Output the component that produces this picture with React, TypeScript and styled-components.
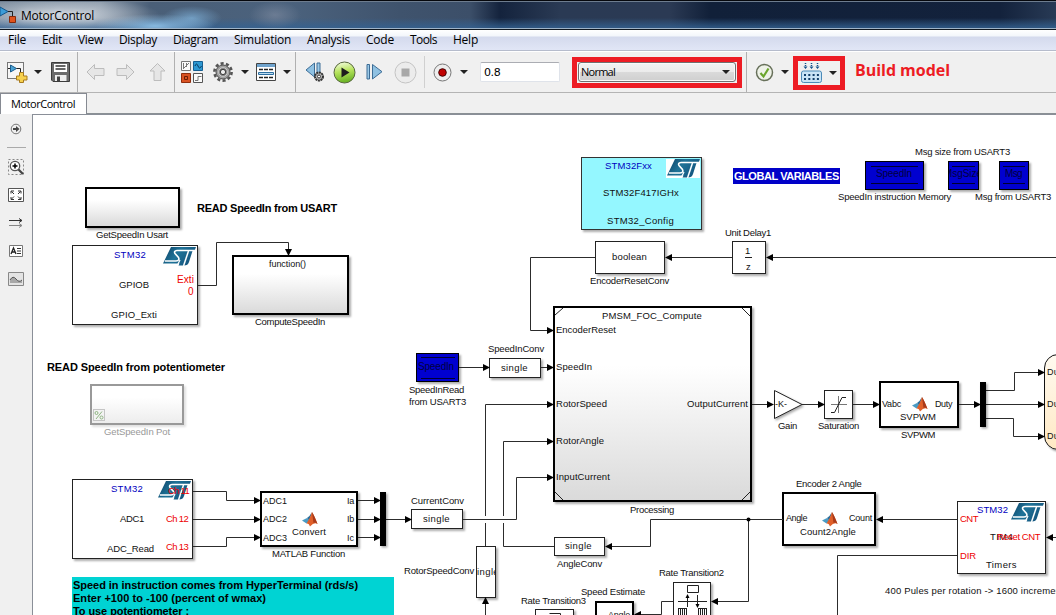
import React from "react";
import styled, { createGlobalStyle, css } from "styled-components";

const GlobalStyle = createGlobalStyle`
  * { box-sizing: border-box; }
  body { margin: 0; background: #f0f0f0; overflow: hidden; }
`;

const UI_FONT = '"Open Sans", "Noto Sans", sans-serif';
const BLOCK_FONT = '"Liberation Sans", Arial, sans-serif';

const pen = document.createElement("canvas").getContext("2d");

/* Letter spacing that makes a label exactly as wide as the room it has. */
function tracking(text: string, width: number, font: string): string {
  if (!pen) return "normal";
  pen.font = font;
  return `${((width - pen.measureText(text).width) / text.length).toFixed(3)}px`;
}

/* ---------- window frame ---------- */

const Window = styled.div`
  display: flex;
  flex-direction: column;
  width: 1056px;
  height: 615px;
  overflow: hidden;
  background: #f0f0f0;
  color: #000;
`;

const TitleBar = styled.header`
  display: flex;
  align-items: center;
  flex: none;
  height: 30px;
  border-top: 1px solid #05070c;
  border-bottom: 1px solid #101820;
  box-shadow: inset 0 1px 0 #6d7c8e, inset 0 -1px 0 #9fb4c8;
  background:
    radial-gradient(ellipse 100px 18px at 60px 14px, rgba(222, 227, 234, 0.8), transparent),
    radial-gradient(ellipse 60px 12px at 155px 25px, rgba(140, 190, 228, 0.95), transparent),
    radial-gradient(ellipse 30px 12px at 192px 17px, rgba(125, 175, 215, 0.75), transparent),
    radial-gradient(ellipse 26px 14px at 275px 14px, rgba(140, 150, 170, 0.5), transparent),
    linear-gradient(180deg, transparent 60%, rgba(52, 98, 146, 0.75) 92%),
    linear-gradient(90deg, #77889a 0, #8796a6 100px, #4a5f78 150px, #4b627d 290px, #3f536d 400px, #3c4f69 470px, #14233d 500px, #2a3a54 560px, #2b3a54 670px, #112039 710px, #13223c 1000px, #283a55 1056px);
`;

const AppIcon = styled.svg`
  flex: none;
  width: 18px;
  height: 20px;
`;

const Title = styled.h1`
  margin: 0 0 0 3px;
  font: 400 12px ${UI_FONT};
  text-shadow: 0 0 6px rgba(255, 255, 255, 0.8);
`;

const MenuBar = styled.nav`
  display: flex;
  align-items: center;
  flex: none;
  height: 21px;
  padding-left: 8px;
  border-bottom: 1px solid #b6bccc;
  background: linear-gradient(#fff 0, #f3f6fb 6px, #d4daed 7px, #e1e6f6 20px);
`;

const MenuItem = styled.span<{ $w: number }>`
  flex: none;
  width: ${(p) => p.$w}px;
  white-space: nowrap;
  font: 400 12px/18px ${UI_FONT};
`;

/* ---------- toolbar ---------- */

const ToolBar = styled.div`
  display: flex;
  align-items: center;
  flex: none;
  height: 42px;
  border-top: 1px solid #fff;
  border-bottom: 1px solid #b4b4b4;
  background: #f0f0f0;
`;

const Slot = styled.div<{ $w: number; $gap: number }>`
  display: flex;
  align-items: center;
  justify-content: center;
  flex: none;
  width: ${(p) => p.$w}px;
  height: 24px;
  margin-left: ${(p) => p.$gap}px;
`;

const Caret = styled.i<{ $gap: number }>`
  flex: none;
  margin-left: ${(p) => p.$gap}px;
  border: solid transparent;
  border-width: 4px 4px 0;
  border-top-color: #222;
`;

const Separator = styled.span<{ $gap: number; $short?: boolean }>`
  flex: none;
  width: 1px;
  height: ${(p) => (p.$short ? "32px" : "40px")};
  margin-left: ${(p) => p.$gap}px;
  background: ${(p) => (p.$short ? "#d0d0d0" : "#b0b0b0")};
`;

const StopTime = styled.div`
  flex: none;
  width: 80px;
  height: 20px;
  margin-left: 12px;
  padding-left: 3px;
  border: 1px solid #dfe3ea;
  border-top-color: #abadb3;
  border-radius: 2px;
  background: #fff;
  font: 11px/20px "DejaVu Sans", sans-serif;
  letter-spacing: -0.4px;
`;

const Highlight = styled.div<{ $w: number; $h: number; $gap: number; $drop?: number }>`
  display: flex;
  align-items: center;
  flex: none;
  width: ${(p) => p.$w}px;
  height: ${(p) => p.$h}px;
  margin-left: ${(p) => p.$gap}px;
  margin-top: ${(p) => p.$drop || 0}px;
  border: 5px solid #ed1c24;
`;

const Combo = styled.div`
  display: flex;
  align-items: center;
  flex: 1;
  height: 20px;
  margin: 0 1px;
  padding: 0 5px 0 2px;
  justify-content: space-between;
  border: 1px solid #707070;
  border-radius: 3px;
  box-shadow: inset 0 0 0 1px #fafafa;
  background: linear-gradient(#f2f2f2, #ebebeb 50%, #dadada 50%, #cfcfcf);
  font: 11px/18px ${UI_FONT};
`;

const Note = styled.strong`
  margin: -4px 0 0 10px;
  white-space: nowrap;
  color: #ed1c24;
  font: 700 16px/20px ${UI_FONT};
`;

/* ---------- tabs and side palette ---------- */

const TabStrip = styled.div`
  display: flex;
  flex: none;
  height: 21px;
  box-shadow: inset 0 -1px 0 #8a9094;
`;

const Tab = styled.div`
  width: 87px;
  padding-left: 10px;
  border: 1px solid #868a92;
  border-bottom: 0;
  background: #fff;
  white-space: nowrap;
  font: 11px/19px ${UI_FONT};
`;

const Body = styled.main`
  display: flex;
  flex: 1;
  min-height: 0;
`;

const Palette = styled.aside`
  display: flex;
  flex-direction: column;
  align-items: center;
  flex: none;
  width: 32px;
  padding-top: 7px;
`;

const PaletteRule = styled.hr`
  width: 19px;
  height: 1px;
  margin: 10px 0 11px;
  border: 0;
  background: #aaa;
`;

const PaletteIcon = styled.svg`
  flex: none;
  width: 16px;
  height: 16px;
  & + & { margin-top: 12px; }
`;

/* ---------- model canvas ---------- */

const Canvas = styled.section`
  position: relative;
  flex: 1;
  overflow: hidden;
  border-top: 1px solid #8a8f98;
  border-left: 1px solid #8a8f98;
  background: #fff;
`;

const Sheet = styled.div`
  position: absolute;
  left: -33px;
  top: -115px;
  width: 1056px;
  height: 615px;
`;

const Wires = styled.svg`
  position: absolute;
  left: 0;
  top: 0;
`;

type Skin = "plain" | "subsystem" | "outlined" | "config" | "store" | "muted" | "chart";

const skins: Record<Skin, ReturnType<typeof css>> = {
  plain: css`border: 1px solid #222; background: #fff;`,
  outlined: css`border: 2px solid #000; background: #fff;`,
  subsystem: css`border: 2px solid #000; background: linear-gradient(#fff 30%, #dadada);`,
  config: css`border: 1px solid #333; background: #94f7ff;`,
  store: css`border: 1px solid #000; background: #0000d0;`,
  muted: css`border: 2px solid #999; background: linear-gradient(#fff 30%, #ededed);`,
  chart: css`border: 1px solid #111; border-radius: 14px; background: linear-gradient(#fffaf0, #ffe9c4);`,
};

const Block = styled.div<{ $x: number; $y: number; $w: number; $h: number; $skin: Skin }>`
  position: absolute;
  left: ${(p) => p.$x}px;
  top: ${(p) => p.$y}px;
  width: ${(p) => p.$w}px;
  height: ${(p) => p.$h}px;
  overflow: hidden;
  box-shadow: 2px 2px 2px rgba(0, 0, 0, ${(p) => (p.$skin === "muted" ? 0.12 : 0.32)});
  ${(p) => skins[p.$skin]}
`;

const LabelText = styled.span<{ $x: number; $y: number; $size: number; $bold?: boolean; $color: string }>`
  position: absolute;
  left: ${(p) => p.$x}px;
  top: ${(p) => p.$y - 6}px;
  white-space: pre;
  color: ${(p) => p.$color};
  font: ${(p) => (p.$bold ? 700 : 400)} ${(p) => p.$size}px/12px ${BLOCK_FONT};
`;

const Banner = styled.div<{ $x: number; $y: number; $w: number; $h: number; $color: string }>`
  position: absolute;
  left: ${(p) => p.$x}px;
  top: ${(p) => p.$y}px;
  width: ${(p) => p.$w}px;
  height: ${(p) => p.$h}px;
  background: ${(p) => p.$color};
`;

type LabelData = [text: string, x: number, y: number, w: number, color?: string, size?: number, bold?: boolean];

function Label({ data }: { data: LabelData }) {
  const [text, x, y, w, color = "#111", size = 9.5, bold = false] = data;
  return (
    <LabelText
      $x={x}
      $y={y}
      $size={size}
      $bold={bold}
      $color={color}
      style={{ letterSpacing: tracking(text, w, `${bold ? 700 : 400} ${size}px ${BLOCK_FONT}`) }}
    >
      {text}
    </LabelText>
  );
}

const blocks: [Skin, number, number, number, number][] = [
  ["subsystem", 85, 187, 95, 41],
  ["plain", 72, 245, 126, 80],
  ["subsystem", 232, 255, 117, 60],
  ["muted", 90, 384, 94, 41],
  ["plain", 72, 479, 121, 80],
  ["outlined", 260, 491, 98, 56],
  ["plain", 411, 509, 52, 20],
  ["plain", 476, 546, 20, 52],
  ["plain", 554, 537, 51, 19],
  ["subsystem", 553, 306, 199, 196],
  ["store", 416, 353, 43, 29],
  ["plain", 489, 358, 52, 20],
  ["config", 581, 157, 121, 73],
  ["plain", 595, 241, 70, 33],
  ["plain", 732, 241, 34, 33],
  ["store", 865, 161, 59, 29],
  ["store", 948, 161, 31, 29],
  ["store", 999, 161, 30, 29],
  ["plain", 824, 390, 29, 29],
  ["outlined", 879, 381, 80, 47],
  ["chart", 1044, 354, 60, 96],
  ["outlined", 782, 492, 94, 54],
  ["plain", 957, 501, 89, 73],
  ["plain", 673, 582, 38, 50],
  ["outlined", 595, 601, 39, 40],
  ["plain", 535, 609, 39, 40],
];

const BLUE = "#0000c0";
const RED = "#ee0000";
const NAVY = "#000040";

const labels: LabelData[] = [
  ["GetSpeedIn Usart", 96, 235, 72],
  ["READ SpeedIn from USART", 197, 208, 140, "#000", 11, true],
  ["STM32", 114, 255, 32, BLUE],
  ["GPIOB", 119, 285, 30],
  ["Exti", 177, 280, 17, RED, 10],
  ["0", 188, 292, 6, RED, 10],
  ["GPIO_Exti", 111, 315, 46],
  ["function()", 269, 264, 37, "#111", 9],
  ["ComputeSpeedIn", 255, 322, 70],
  ["READ SpeedIn from potentiometer", 47, 367, 178, "#000", 11, true],
  ["GetSpeedIn Pot", 104, 432, 66, "#999"],
  ["STM32", 111, 489, 32, BLUE],
  ["ADC1", 120, 519, 24],
  ["Ch 12", 166, 519, 22, RED],
  ["ADC_Read", 107, 549, 47],
  ["Ch 13", 166, 547, 22, RED],
  ["ADC1", 263, 501, 24, "#111", 9],
  ["ADC2", 263, 519, 24, "#111", 9],
  ["ADC3", 263, 538, 24, "#111", 9],
  ["Ia", 347, 501, 7, "#111", 9],
  ["Ib", 347, 519, 7, "#111", 9],
  ["Ic", 347, 538, 7, "#111", 9],
  ["Convert", 292, 532, 34],
  ["MATLAB Function", 272, 554, 73],
  ["CurrentConv", 411, 501, 53],
  ["single", 423, 519, 27],
  ["RotorSpeedConv", 404, 571, 70],
  ["single", 565, 546, 27],
  ["AngleConv", 557, 564, 45],
  ["PMSM_FOC_Compute", 602, 316, 100],
  ["EncoderReset", 556, 330, 60],
  ["SpeedIn", 556, 367, 36],
  ["RotorSpeed", 556, 404, 51],
  ["RotorAngle", 556, 441, 48],
  ["InputCurrent", 556, 477, 54],
  ["OutputCurrent", 687, 404, 61],
  ["Processing", 630, 510, 44],
  ["SpeedIn", 418, 367, 36, NAVY, 10],
  ["SpeedInRead", 409, 390, 55],
  ["from USART3", 409, 402, 57],
  ["SpeedInConv", 488, 349, 56],
  ["single", 501, 368, 27],
  ["STM32Fxx", 605, 166, 47, BLUE],
  ["STM32F417IGHx", 603, 193, 76],
  ["STM32_Config", 607, 221, 67],
  ["boolean", 612, 257, 35],
  ["EncoderResetConv", 590, 281, 79],
  ["Unit Delay1", 725, 233, 46],
  ["1", 745, 251, 6],
  ["z", 746, 267, 5],
  ["GLOBAL VARIABLES", 734, 176, 105, "#fff", 11, true],
  ["SpeedIn", 876, 174, 36, NAVY, 10],
  ["Msg", 1005, 174, 17, NAVY, 10],
  ["SpeedIn instruction Memory", 838, 197, 113],
  ["Msg size from USART3", 915, 152, 95],
  ["Msg from USART3", 975, 197, 76],
  ["-K-", 775, 404, 12, "#111", 9],
  ["Gain", 778, 426, 19],
  ["Saturation", 818, 426, 41],
  ["Vabc", 882, 404, 19, "#111", 9],
  ["Duty", 935, 404, 17, "#111", 9],
  ["SVPWM", 900, 417, 36],
  ["SVPWM", 901, 435, 34],
  ["Du", 1047, 372, 12, "#111", 9],
  ["Du", 1047, 404, 12, "#111", 9],
  ["Du", 1047, 436, 12, "#111", 9],
  ["Encoder 2 Angle", 796, 484, 66],
  ["Angle", 786, 518, 21, "#111", 9],
  ["Count", 849, 518, 23, "#111", 9],
  ["Count2Angle", 800, 532, 56],
  ["STM32", 977, 510, 31, BLUE],
  ["CNT", 960, 519, 18, RED],
  ["DIR", 960, 556, 16, RED],
  ["TIM4", 990, 537, 23],
  ["Reset CNT", 997, 537, 43, RED],
  ["Timers", 986, 565, 31],
  ["400 Pules per rotation -> 1600 increments", 885, 591, 184],
  ["Speed Estimate", 581, 592, 64],
  ["Rate Transition2", 659, 573, 65],
  ["Rate Transition3", 521, 601, 65],
  ["Angle", 608, 615, 22, "#111", 9],
  ["Speed in instruction comes from HyperTerminal (rds/s)", 73, 585, 285, "#000", 11, true],
  ["Enter +100 to -100 (percent of wmax)", 73, 598, 193, "#000", 11, true],
  ["To use potentiometer :", 73, 611, 116, "#000", 11, true],
];

/* Signal lines, in the order in which they are laid over each other. */
const lines = [
  "M198 285.5H216.5V242.5H288.5V250",
  "M193 491.5H226.5V500.5H255",
  "M193 519.5H255",
  "M193 546.5H226.5V537.5H255",
  "M358 500.5H375M358 519.5H375M358 537.5H375",
  "M386 519.5H406",
  "M485.5 546V404.5H548M485.5 615V603",
  "M554 546.5H503.5V441.5H548",
  "M595 257.5H530.5V330.5H548",
  "M732 257.5H671M1056 257.5H772",
  "M459 367.5H484M541 367.5H548",
  "M752 404.5H769M802 404.5H819M853 404.5H874M959 404.5H975",
  "M986 390.5H1014.5V372.5H1039M986 404.5H1039M986 418.5H1013.5V436.5H1039",
  "M783 519.5H650.5V546.5H611M748.5 519.5V601.5H717",
  "M957 519.5H882M957 555.5H837.5V615M1056 537.5H1052",
  "M673 601.5H661.5V614.5H640",
];

/* Arrow tips: position and heading in degrees, 0 points right. */
const tips: [number, number, number][] = [
  [288.5, 256, 90],
  [261, 500.5, 0], [261, 519.5, 0], [261, 537.5, 0],
  [381, 500.5, 0], [381, 519.5, 0], [381, 537.5, 0],
  [412, 519.5, 0], [485.5, 597, -90],
  [554, 330.5, 0], [554, 367.5, 0], [554, 404.5, 0], [554, 441.5, 0], [554, 477.5, 0],
  [490, 367.5, 0], [605, 546.5, 180], [665, 257.5, 180], [766, 257.5, 180],
  [774, 404.5, 0], [825, 404.5, 0], [880, 404.5, 0], [981, 404.5, 0],
  [1045, 372.5, 0], [1045, 404.5, 0], [1045, 436.5, 0],
  [876, 519.5, 180], [1046, 537.5, 180], [711, 601.5, 180], [634, 614.5, 180],
];

function StLogo({ x, y }: { x: number; y: number }) {
  return (
    <g transform={`translate(${x} ${y})`}>
      <path d="M8 0H33L31.500 4H29.500L26 15Q25 18.500 21 18.500H15.500L16.500 16.500H0Z" fill="url(#st)" />
      <path d="M32.500 3.500H14Q10.500 4 12 6.500L15.500 10.500Q17 13.500 13 14H1.800" fill="none" stroke="#fff" strokeWidth="1.600" />
      <path d="M25.500 4L20.500 19" fill="none" stroke="#fff" strokeWidth="1.500" />
      <path d="M17 13L14 19" fill="none" stroke="#fff" strokeWidth="1.300" />
    </g>
  );
}

function MatlabLogo({ x, y }: { x: number; y: number }) {
  return (
    <g transform={`translate(${x} ${y})`}>
      <path d="M0 8.500L5 6L7.500 9L4.500 11.500Z" fill="#4a9bc4" />
      <path d="M5 6Q8 4 10 0L7.500 9Z" fill="#2a6e9c" />
      <path d="M4.500 11.500Q8 7 10 0Q12.500 4 15.500 12Q12.500 9.500 8 14.500Q7 11 4.500 11.500Z" fill="#e0602a" />
      <path d="M10 0Q12.500 4 15.500 12Q13 9.800 11.500 11Z" fill="#a83a1a" />
    </g>
  );
}

function Diagram() {
  return (
    <Canvas>
      <Sheet>
        <Banner $x={72} $y={577} $w={322} $h={38} $color="#00d3d3" />
        <Banner $x={733} $y={168} $w={107} $h={16} $color="#0000c8" />
        {blocks.map(([skin, x, y, w, h]) => (
          <Block key={`${x}-${y}`} $skin={skin} $x={x} $y={y} $w={w} $h={h}>
            {x === 948 && <Label data={["MsgSize", -5, 12, 38, NAVY, 10]} />}
            {x === 476 && <Label data={["single", -5, 25, 27]} />}
          </Block>
        ))}
        <Wires width="1056" height="615" viewBox="0 0 1056 615">
          <defs>
            <linearGradient id="st" x1="0" y1="0" x2="1" y2="0.400">
              <stop offset="0" stopColor="#0d3f63" />
              <stop offset="0.500" stopColor="#1f7398" />
              <stop offset="1" stopColor="#14557e" />
            </linearGradient>
            <filter id="soft" x="-20%" y="-20%" width="150%" height="150%">
              <feDropShadow dx="1.500" dy="1.500" stdDeviation="1" floodOpacity="0.350" />
            </filter>
          </defs>
          <g fill="none" stroke="#2c2c2c">
            {lines.map((d) => <path key={d} d={d} />)}
          </g>
          <path d="M485.500 516V523M503.500 516V523" stroke="#fff" strokeWidth="3" />
          <path d="M463 519.500H516.500V477.500H548" fill="none" stroke="#2c2c2c" />
          <g fill="#000">
            {tips.map(([x, y, a]) => (
              <path key={`${x},${y}`} d="M0 0L-7 -3.500V3.500Z" transform={`translate(${x} ${y}) rotate(${a})`} />
            ))}
            <circle cx="748.500" cy="519.500" r="2" />
            <path d="M380 492h6v54h-6zM980 382h6v45h-6z" filter="url(#soft)" />
          </g>
          <path d="M774.500 390.500L802 404.500L774.500 418.500Z" fill="#fff" stroke="#222" filter="url(#soft)" />
          <g fill="none" stroke="#222">
            <path d="M831 404.500H847M838.500 396V413" stroke="#777" />
            <path d="M831 412.500H834.500L842 397.500H846" />
            <path d="M745 257.500H752" />
            <path d="M555 315L563 308M742 308L750 316M555 492L563 500M742 500L750 492" />
            <path d="M871 166.500H918M871 183.500H918M952 166.500H975M952 183.500H975M1003 166.500H1025M1003 183.500H1025M421 357.500H455M421 378.500H455" stroke="#000030" />
            <path d="M687.500 585.500H698.500V592.500H687.500ZM678 601.500H707M687.500 607V596M697.500 595V607M549.500 613.500H560.500V620" />
            <path d="M678.500 609V615M680.500 609V615M682.500 609V615M684.500 609V615M686.500 609V615M698.500 609V615M700.500 609V615M702.500 609V615M704.500 609V615M706.500 609V615M678 608.500H687M698 608.500H707" />
          </g>
          <path d="M687.500 594L689.500 598H685.500ZM697.500 608L699.500 604H695.500Z" />
          <rect x="93.500" y="409.500" width="11" height="11" fill="#f3f3f3" stroke="#c5c5c5" />
          <g fill="none" stroke="#8fb582">
            <circle cx="96.500" cy="413" r="1.500" />
            <circle cx="101.500" cy="417.500" r="1.500" />
            <path d="M96 419L102 411.500" />
          </g>
          <path d="M666 159H700V178H666Z" fill="#fff" />
          <StLogo x={667} y={159} />
          <StLogo x={163} y={247} />
          <StLogo x={158} y={481} />
          <StLogo x={1011} y={503} />
          <MatlabLogo x={302} y={512} />
          <MatlabLogo x={912} y={397} />
          <MatlabLogo x={822} y={512} />
        </Wires>
        {labels.map((l) => <Label key={`${l[0]}${l[1]}${l[2]}`} data={l} />)}
        <Label data={["Ch 11", 168, 491, 21, RED]} />
      </Sheet>
    </Canvas>
  );
}

/* ---------- toolbar drawings ---------- */

const NewModelIcon = () => (
  <svg width="21" height="22" viewBox="0 0 21 22">
    <rect x="0.500" y="1.500" width="16" height="16" fill="#f6f6f6" stroke="#777" />
    <path d="M3.500 4L9.500 7.500L3.500 11Z" fill="#4aa3d6" stroke="#1b5c8c" />
    <path d="M1 7.500H3M9.500 7.500H13.500V12" fill="none" stroke="#222" />
    <path d="M12.500 11.500h4v3.500h3.500v4h-3.500v2.500h-4v-2.500h-3v-4h3z" fill="#f6d04d" stroke="#a87b1e" />
  </svg>
);

const SaveIcon = () => (
  <svg width="19" height="20" viewBox="0 0 19 20">
    <path d="M0.500 0.500H18.500V19.500H2L0.500 18Z" fill="#6b6b6b" stroke="#3c3c3c" />
    <path d="M3 2H16V10H3Z" fill="#fff" />
    <path d="M4.500 4H14.500M4.500 7H14.500" stroke="#333" strokeWidth="1.500" />
    <path d="M4 13H15.500V19H4Z" fill="#eee" />
    <path d="M6 14.500H9V19H6Z" fill="#444" />
  </svg>
);

const GhostArrow = ({ turn }: { turn: number }) => (
  <svg width="19" height="18" viewBox="0 0 19 18">
    <path
      d="M1 9L8.500 1.500V5.500H18V12.500H8.500V16.500Z"
      fill="#e6e6e6"
      stroke="#bcbcbc"
      transform={`rotate(${turn} 9.500 9)`}
    />
  </svg>
);

const LibraryIcon = () => (
  <svg width="23" height="22" viewBox="0 0 23 22">
    <path d="M0.500 0.500h9v9h-9z" fill="#fafafa" stroke="#777" />
    <path d="M2.500 2V7M5.500 2V6M2 8L8 2" fill="none" stroke="#777" />
    <path d="M12.500 0.500h9v9h-9z" fill="#2e98d2" stroke="#155e91" />
    <path d="M14 5Q15.500 1 17 5T20.500 5" fill="none" stroke="#08385c" />
    <path d="M0.500 12.500h9v9h-9z" fill="#d95222" stroke="#8e2d0e" />
    <path d="M3.500 15.500h3v3h-3z" fill="none" stroke="#6b1d05" />
    <path d="M12.500 12.500h9v9h-9z" fill="#fafafa" stroke="#555" />
    <path d="M14 19.500H17V15.500H20.500" fill="none" stroke="#777" />
  </svg>
);

const Gear = () => (
  <svg width="20" height="20" viewBox="0 0 20 20">
    <circle cx="10" cy="10" r="8.600" fill="none" stroke="#555" strokeWidth="2.600" strokeDasharray="3.100 2.303" />
    <circle cx="10" cy="10" r="7" fill="#a2a2a2" stroke="#4c4c4c" />
    <circle cx="10" cy="10" r="4.300" fill="#6c6c6c" stroke="#d2d2d2" />
    <circle cx="10" cy="10" r="2.600" fill="#efefef" stroke="#3a3a3a" />
  </svg>
);

const ExplorerIcon = () => (
  <svg width="20" height="18" viewBox="0 0 20 18">
    <path d="M0.500 0.500h19v17h-19z" fill="#fff" stroke="#444" />
    <path d="M1 1h18v3h-18z" fill="#6fa3cd" />
    <path d="M3 6.500h14M3 14.500h14" stroke="#222" strokeWidth="1.300" strokeDasharray="4 1" />
    <path d="M2.500 9.500h15v2h-15z" fill="#bcdcf0" stroke="#2c6ea0" />
  </svg>
);

const StepBackIcon = () => (
  <svg width="20" height="20" viewBox="0 0 20 20">
    <path d="M9.500 1V15L1 8Z" fill="#8fc1e2" stroke="#3d6d96" />
    <path d="M12 1h3v13h-3z" fill="#9ccae8" stroke="#3d6d96" />
    <circle cx="14" cy="14.500" r="4" fill="#bbb" stroke="#333" strokeWidth="2" strokeDasharray="2 0.600" />
    <circle cx="14" cy="14.500" r="1.500" fill="#fff" stroke="#333" />
  </svg>
);

const PlayIcon = () => (
  <svg width="23" height="23" viewBox="0 0 23 23">
    <defs>
      <linearGradient id="go" x2="0.200" y2="1">
        <stop offset="0" stopColor="#fbfff0" />
        <stop offset="0.500" stopColor="#b8e45e" />
        <stop offset="1" stopColor="#6db528" />
      </linearGradient>
    </defs>
    <circle cx="11.500" cy="11.500" r="10.500" fill="url(#go)" stroke="#56663c" />
    <path d="M8.500 6.500L16.500 11.500L8.500 16.500Z" fill="#1d1d1d" />
  </svg>
);

const StepForwardIcon = () => (
  <svg width="17" height="18" viewBox="0 0 17 18">
    <path d="M1 1.500h2.500v14.500h-2.500z" fill="#9ccae8" stroke="#3d6d96" />
    <path d="M6.500 1.500V16L16 8.700Z" fill="#8fc1e2" stroke="#3d6d96" />
  </svg>
);

const StopIcon = () => (
  <svg width="23" height="23" viewBox="0 0 23 23">
    <circle cx="11.500" cy="11.500" r="10.500" fill="#ececec" stroke="#c4c4c4" />
    <path d="M7.500 7.500h8v8h-8z" fill="#a8a8a8" />
  </svg>
);

const RecordIcon = () => (
  <svg width="19" height="19" viewBox="0 0 19 19">
    <circle cx="9.500" cy="9.500" r="8.500" fill="#ededed" stroke="#777" />
    <circle cx="9.500" cy="9.500" r="3.800" fill="#c00000" stroke="#400" />
  </svg>
);

const CheckIcon = () => (
  <svg width="19" height="19" viewBox="0 0 19 19">
    <circle cx="9.500" cy="9.500" r="8" fill="#eef2e8" stroke="#67705a" strokeWidth="1.500" />
    <path d="M5.500 10L8.500 13.500L13.500 5.500" fill="none" stroke="#6aa52c" strokeWidth="2.200" />
  </svg>
);

const BuildIcon = () => (
  <svg width="21" height="22" viewBox="0 0 21 22">
    <path d="M4.500 1V5M10.500 1V5M16.500 1V5" stroke="#14518a" strokeDasharray="1 1" strokeWidth="1.500" />
    <path d="M2.500 4.500h4l-2 2.500zM8.500 4.500h4l-2 2.500zM14.500 4.500h4l-2 2.500z" fill="#14518a" />
    <rect x="0.500" y="9" width="20" height="11.500" rx="2" fill="#c9e4f6" stroke="#4b8ab8" />
    <path d="M3 13h15M3 17h15" stroke="#123f6a" strokeWidth="2" strokeDasharray="2 2.300" />
  </svg>
);

const menus: [string, number, number][] = [
  ["File", 34, 18], ["Edit", 36, 20], ["View", 41, 25], ["Display", 54, 38], ["Diagram", 61, 45],
  ["Simulation", 73, 57], ["Analysis", 59, 43], ["Code", 44, 28], ["Tools", 43, 27], ["Help", 40, 25],
];

export default function App() {
  return (
    <Window>
      <GlobalStyle />
      <TitleBar>
        <AppIcon viewBox="0 0 18 20">
          <path d="M0 2L8 6.500L0 11Z" fill="#3b9cd8" stroke="#15568a" />
          <path d="M8 6.500H12.500V11" fill="none" stroke="#222" />
          <path d="M9.500 11.500h6v6h-6z" fill="#e0531c" stroke="#84290a" />
        </AppIcon>
        <Title style={{ letterSpacing: tracking("MotorControl", 73, `12px ${UI_FONT}`) }}>MotorControl</Title>
      </TitleBar>
      <MenuBar>
        {menus.map(([name, room, w]) => (
          <MenuItem key={name} $w={room} style={{ letterSpacing: tracking(name, w, `12px ${UI_FONT}`) }}>
            {name}
          </MenuItem>
        ))}
      </MenuBar>
      <ToolBar>
        <Slot $w={21} $gap={7}><NewModelIcon /></Slot>
        <Caret $gap={6} />
        <Slot $w={19} $gap={9}><SaveIcon /></Slot>
        <Separator $gap={7} />
        <Slot $w={19} $gap={8}><GhostArrow turn={0} /></Slot>
        <Slot $w={19} $gap={11}><GhostArrow turn={180} /></Slot>
        <Slot $w={19} $gap={13}><GhostArrow turn={90} /></Slot>
        <Separator $gap={7} />
        <Slot $w={23} $gap={6}><LibraryIcon /></Slot>
        <Slot $w={20} $gap={9}><Gear /></Slot>
        <Caret $gap={8} />
        <Slot $w={20} $gap={7}><ExplorerIcon /></Slot>
        <Caret $gap={7} />
        <Separator $gap={4} />
        <Slot $w={20} $gap={9}><StepBackIcon /></Slot>
        <Slot $w={23} $gap={8}><PlayIcon /></Slot>
        <Slot $w={17} $gap={10}><StepForwardIcon /></Slot>
        <Slot $w={23} $gap={11}><StopIcon /></Slot>
        <Separator $gap={7} $short />
        <Slot $w={19} $gap={8}><RecordIcon /></Slot>
        <Caret $gap={8} />
        <StopTime>0.8</StopTime>
        <Highlight $w={170} $h={31} $gap={12}>
          <Combo>
            <span style={{ letterSpacing: tracking("Normal", 34, `11px ${UI_FONT}`) }}>Normal</span>
            <Caret $gap={0} />
          </Combo>
        </Highlight>
        <Separator $gap={4} />
        <Slot $w={19} $gap={8}><CheckIcon /></Slot>
        <Caret $gap={7} />
        <Highlight $w={52} $h={34} $gap={4} $drop={2}>
          <Slot $w={21} $gap={3}><BuildIcon /></Slot>
          <Caret $gap={7} />
        </Highlight>
        <Note style={{ letterSpacing: tracking("Build model", 95, `700 16px ${UI_FONT}`) }}>Build model</Note>
      </ToolBar>
      <TabStrip>
        <Tab style={{ letterSpacing: tracking("MotorControl", 64, `11px ${UI_FONT}`) }}>MotorControl</Tab>
      </TabStrip>
      <Body>
        <Palette>
          <PaletteIcon viewBox="0 0 16 16">
            <circle cx="8" cy="8" r="4.800" fill="#eee" stroke="#777" />
            <path d="M5 7H8V5L11.500 8L8 11V9H5Z" fill="#444" />
          </PaletteIcon>
          <PaletteRule />
          <PaletteIcon viewBox="0 0 16 16">
            <path d="M0.500 0.500h15v15h-15z" fill="none" stroke="#888" strokeDasharray="2 2" />
            <circle cx="7" cy="7" r="4.700" fill="#fff" stroke="#555" strokeWidth="1.300" />
            <path d="M4.500 7h5M7 4.500v5" stroke="#000" strokeWidth="1.500" />
            <path d="M10.500 10.500L15 15" stroke="#444" strokeWidth="2.200" />
          </PaletteIcon>
          <PaletteIcon viewBox="0 0 16 16">
            <path d="M0.500 1.500h15v13h-15z" fill="#fff" stroke="#555" />
            <path d="M3 6.500V4H6M3.500 4.500L6 7M10 4H13V6.500M12.500 4.500L10 7M3 10V12.500H6M3.500 12L6 9.500M13 10V12.500H10M12.500 12L10 9.500" fill="none" stroke="#333" />
          </PaletteIcon>
          <PaletteIcon viewBox="0 0 16 16">
            <path d="M1 5.500H14M11 3.500L14 5.500L11 7.500" fill="none" stroke="#333" />
            <path d="M1 10.500H14M11 8.500L14 10.500L11 12.500" fill="none" stroke="#888" />
          </PaletteIcon>
          <PaletteIcon viewBox="0 0 16 16">
            <path d="M1.500 2.500h13v11h-13z" fill="#fff" stroke="#777" />
            <path d="M3 11L5.500 5L8 11M4 9H7" fill="none" stroke="#222" strokeWidth="1.300" />
            <path d="M9 5.500H13M9 8H13M9 10.500H13" stroke="#333" />
          </PaletteIcon>
          <PaletteIcon viewBox="0 0 16 16">
            <path d="M0.500 1.500h15v13h-15z" fill="#e4e4e4" stroke="#888" />
            <path d="M2 12V9Q5 4 8 8T14 9V12Z" fill="#a8a8a8" />
            <path d="M2 9Q5 4 8 8T14 9" fill="none" stroke="#555" />
          </PaletteIcon>
        </Palette>
        <Diagram />
      </Body>
    </Window>
  );
}
